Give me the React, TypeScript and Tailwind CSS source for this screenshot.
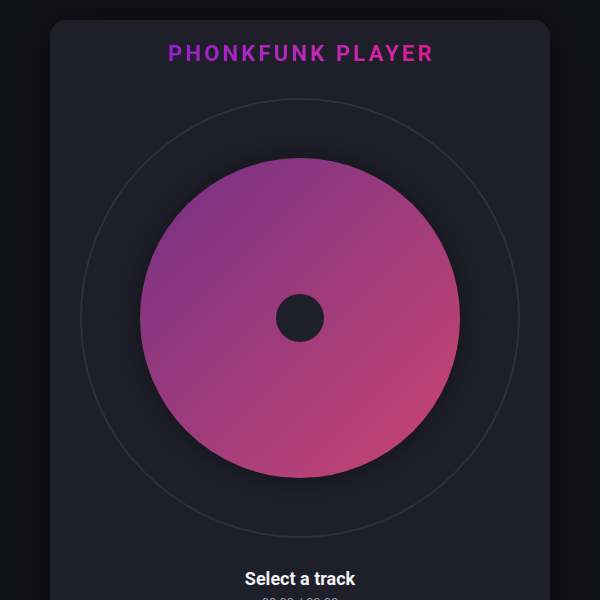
export default function App() {
  return (
    <div className="h-[600px] w-[600px] overflow-hidden bg-[#121219] font-['Roboto',sans-serif]">
      <div className="mx-auto mt-5 flex w-[500px] flex-col items-center rounded-2xl bg-[#1e1f29] pt-5 shadow-[0_0_40px_rgba(0,0,0,0.6)]">
        <h1 className="bg-gradient-to-r from-[#941bd2] to-[#e2179a] bg-clip-text pl-[3px] text-[22px] leading-7 font-bold tracking-[3.2px] text-transparent">
          PHONKFUNK PLAYER
        </h1>
        <div className="mt-[30px] flex h-[440px] w-[440px] items-center justify-center rounded-full border-2 border-[#2f3039]">
          <div className="flex h-[320px] w-[320px] items-center justify-center rounded-full bg-gradient-to-br from-[#742e84] to-[#cc4370] shadow-[0_0_24px_rgba(0,0,0,0.45)]">
            <div className="h-12 w-12 rounded-full bg-[#1e1f29]" />
          </div>
        </div>
        <div className="mt-[29px] text-lg leading-6 font-bold text-[#f2f2f5]">Select a track</div>
        <div className="mt-0.5 text-[13px] text-[#9a9aa6]">00:00 / 00:00</div>
        <div className="h-10" />
      </div>
    </div>
  );
}
